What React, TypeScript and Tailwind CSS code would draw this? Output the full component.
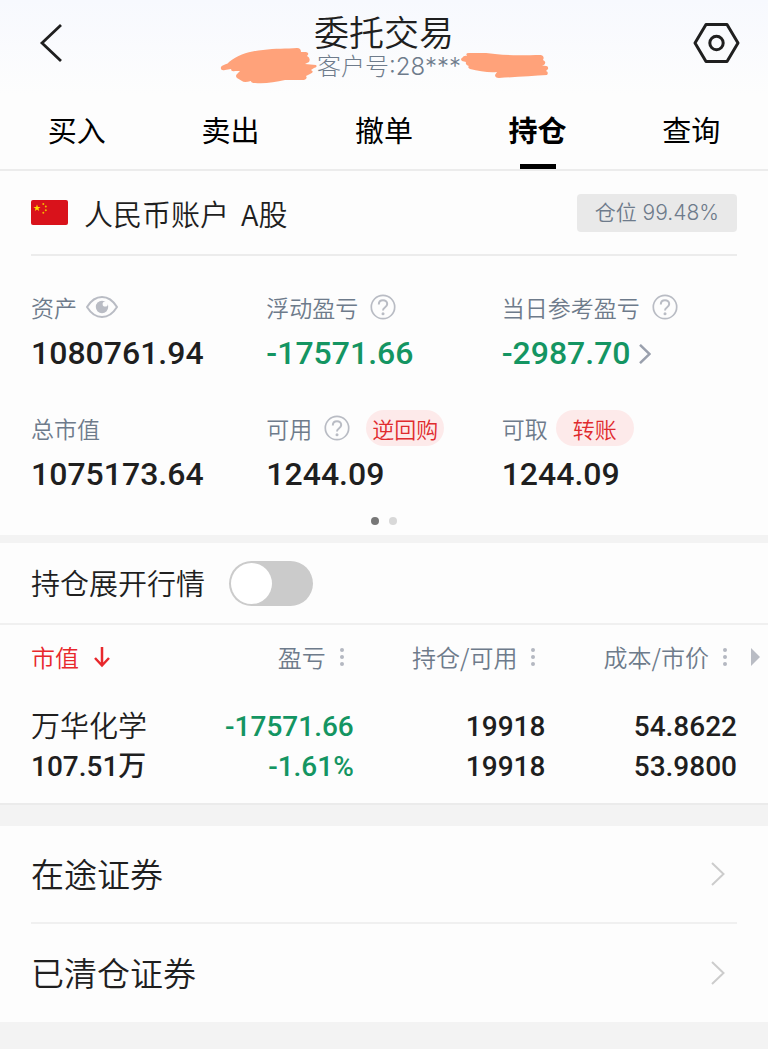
import { useState } from 'react';

const TABS = ['买入', '卖出', '撤单', '持仓', '查询'];

const COLUMNS = ['盈亏', '持仓/可用', '成本/市价'];

const HOLDINGS = [
  {
    name: '万华化学',
    marketValue: '107.51万',
    profit: '-17571.66',
    profitRate: '-1.61%',
    position: '19918',
    available: '19918',
    cost: '54.8622',
    price: '53.9800'
  }
];

const LINKS = ['在途证券', '已清仓证券'];

const HelpIcon = () => (
  <svg viewBox="0 0 26 26" className="w-[26px] h-[26px]" fill="none" stroke="#b9bcc4" strokeWidth="2">
    <circle cx="13" cy="13" r="11.7" strokeWidth="1.7" />
    <path d="M8.8 10.4c0-2.5 1.8-4.2 4.2-4.2s4.2 1.6 4.2 3.8c0 1.8-1 2.6-2.3 3.5-1.3.9-1.9 1.6-1.9 3.1" />
    <circle cx="13" cy="19.8" r="1.5" fill="#b9bcc4" stroke="none" />
  </svg>
);

const EyeIcon = () => (
  <svg viewBox="0 0 34 24" className="w-[34px] h-6">
    <path
      d="M2 12C6 5.500 11 2 17 2s11 3.500 15 10c-4 6.500-9 10-15 10S6 18.500 2 12z"
      fill="none"
      stroke="#b9bcc4"
      strokeWidth="2"
      strokeLinejoin="round"
    />
    <circle cx="17" cy="12" r="6.200" fill="#b9bcc4" />
    <circle cx="20.200" cy="9" r="2.600" fill="#fdfdfd" />
  </svg>
);

const FlagIcon = () => (
  <svg viewBox="0 0 37 25" className="w-[37px] h-[25px]">
    <rect width="37" height="25" rx="2" fill="#d9121b" />
    <path d="M6 4.400l.9 2.500h2.700l-2.200 1.600.8 2.600L6 9.500l-2.200 1.600.8-2.600-2.200-1.600h2.700z" fill="#ffde00" />
    <g fill="#f5b800">
      <circle cx="12.300" cy="4" r="1" />
      <circle cx="14.800" cy="6.500" r="1" />
      <circle cx="14.800" cy="10.200" r="1" />
      <circle cx="12.300" cy="12.800" r="1" />
    </g>
  </svg>
);

const MoreDots = () => (
  <svg viewBox="0 0 4 20" className="w-1 h-5" fill="#b4b8c1">
    <circle cx="2" cy="3" r="2" />
    <circle cx="2" cy="10" r="2" />
    <circle cx="2" cy="17" r="2" />
  </svg>
);

const Chevron = ({ className }: { className: string }) => (
  <svg viewBox="0 0 14 24" className={className} fill="none" stroke="currentColor">
    <path d="M1 1l11.500 11L1 23" />
  </svg>
);

const App = () => {
  const [activeTab, setActiveTab] = useState('持仓');
  const [expanded, setExpanded] = useState(false);

  return (
    <div className="min-h-screen bg-[#f3f3f3] text-[#1f1f1f] font-['Noto_Sans_CJK_SC',sans-serif] font-[350]">
      <div className="bg-[#fdfdfd]">
        <header className="flex items-center justify-between h-[94px] px-7 pb-2 bg-linear-to-b from-[#f7f9fe] to-[#fdfdfd]">
          <button aria-label="返回" className="w-12 pl-[10px]">
            <svg viewBox="0 0 26 40" className="w-[26px] h-10" fill="none" stroke="#1f1f1f" strokeWidth="2.800">
              <path d="M23 2L4 20l19 18" />
            </svg>
          </button>
          <div className="flex flex-col items-center pt-[10px]">
            <h1 className="text-[35px] leading-[38px]">委托交易</h1>
            <div className="flex items-center text-2xl leading-[34px] text-[#6e7b8b]">
              <svg viewBox="0 0 98 38" className="w-[98px] h-[38px] -my-2" fill="#ffa27a">
                <path d="M2 19C4 16 8 17 10 14C20 6 32 3 44 2C56 0 68 1 78 0Q82 0 82 4L87 4Q91 5 88 8Q92 10 90 14L86 16L97 17Q99 19 95 20L92 22Q96 24 91 26L87 28Q89 31 85 32L66 32C56 34 46 36 36 35Q32 35 32 33Q25 35 23 33L18 30Q16 28 18 26L21 23L16 23Q12 24 12 21L6 22Q1 23 2 19Z" />
              </svg>
              <span className="font-['Inter','Noto_Sans_CJK_SC',sans-serif] font-light">客户号:28***</span>
              <svg viewBox="0 0 88 28" className="w-[88px] h-7 -my-2" fill="#ffa27a">
                <path d="M1 5Q3 2 6 3Q4 0 8 0C18-1 26 0 34 1C50 3 66 2 80 2Q84 3 82 7Q86 9 83 12L81 13Q88 12 87 16L85 18Q88 19 86 22C72 23 54 24 38 25Q34 25 34 22L36 19C28 20 18 18 9 16Q6 14 8 13Q4 12 5 9L1 8Q-1 6 1 5Z" />
              </svg>
            </div>
          </div>
          <button aria-label="设置" className="w-12">
            <svg viewBox="0 0 48 42" className="w-12 h-[42px]" fill="none" stroke="#1f1f1f" strokeWidth="3">
              <path d="M14 2.500h21l11 18.500-11 18.500H14L3 21z" strokeLinejoin="round" />
              <circle cx="24.500" cy="21" r="6.700" />
            </svg>
          </button>
        </header>

        <nav className="grid grid-cols-5 border-b-2 border-[#ececec] text-black">
          {TABS.map((tab) => (
            <button
              key={tab}
              onClick={() => setActiveTab(tab)}
              className={`flex flex-col items-center justify-between h-[75px] pt-[14px] text-[29px] leading-[42px] ${
                tab === activeTab ? 'font-bold' : 'font-normal'
              }`}
            >
              {tab}
              {tab === activeTab && <span className="w-9 h-[5px] bg-black"></span>}
            </button>
          ))}
        </nav>

        <section className="px-[31px]">
          <div className="flex items-center justify-between h-[85px] border-b-2 border-[#ececec]">
            <div className="flex items-center gap-4">
              <FlagIcon />
              <h2 className="flex gap-3 text-[29px] leading-10">
                <span>人民币账户</span> <span>A股</span>
              </h2>
            </div>
            <span className="px-[18px] rounded bg-[#e9e9e9] text-[#6e7b8b] text-[21px] leading-[38px] font-['Inter','Noto_Sans_CJK_SC',sans-serif]">
              仓位 99.48%
            </span>
          </div>

          <div className="grid grid-cols-3 gap-y-7 pt-[27px]">
            <div>
              <div className="flex items-center gap-2 h-12 text-[23px] text-[#6e7b8b]">
                资产
                <button aria-label="隐藏资产">
                  <EyeIcon />
                </button>
              </div>
              <div className="text-[32px] leading-[45px] font-medium font-['Roboto',sans-serif]">1080761.94</div>
            </div>
            <div>
              <div className="flex items-center gap-3 h-12 text-[23px] text-[#6e7b8b]">
                浮动盈亏
                <button aria-label="浮动盈亏说明">
                  <HelpIcon />
                </button>
              </div>
              <div className="text-[32px] leading-[45px] font-medium font-['Roboto',sans-serif] text-[#149562]">-17571.66</div>
            </div>
            <div>
              <div className="flex items-center gap-3 h-12 text-[23px] text-[#6e7b8b]">
                当日参考盈亏
                <button aria-label="当日参考盈亏说明">
                  <HelpIcon />
                </button>
              </div>
              <a
                href="#today"
                className="flex items-center gap-2 text-[32px] leading-[45px] font-medium font-['Roboto',sans-serif] text-[#149562]"
              >
                -2987.70
                <Chevron className="w-3 h-5 text-[#9aa0ad] stroke-3" />
              </a>
            </div>
            <div>
              <div className="flex items-center h-12 text-[23px] text-[#6e7b8b]">总市值</div>
              <div className="text-[32px] leading-[45px] font-medium font-['Roboto',sans-serif]">1075173.64</div>
            </div>
            <div>
              <div className="flex items-center gap-3 h-12 text-[23px] text-[#6e7b8b]">
                可用
                <button aria-label="可用说明">
                  <HelpIcon />
                </button>
                <button className="w-[78px] ml-1 rounded-full bg-[#fdeaea] text-[#e02b2e] text-[22px] leading-9">
                  逆回购
                </button>
              </div>
              <div className="text-[32px] leading-[45px] font-medium font-['Roboto',sans-serif]">1244.09</div>
            </div>
            <div>
              <div className="flex items-center gap-2 h-12 text-[23px] text-[#6e7b8b]">
                可取
                <button className="w-[78px] rounded-full bg-[#fdeaea] text-[#e02b2e] text-[22px] leading-9">
                  转账
                </button>
              </div>
              <div className="text-[32px] leading-[45px] font-medium font-['Roboto',sans-serif]">1244.09</div>
            </div>
          </div>

          <div className="flex justify-center gap-[10px] pt-5 pb-[10px]">
            <span className="w-2 h-2 rounded-full bg-[#777777]"></span>
            <span className="w-2 h-2 rounded-full bg-[#d8d8d8]"></span>
          </div>
        </section>

        <div className="h-2 bg-[#f3f3f3]"></div>

        <label className="flex items-center gap-6 h-[82px] px-[31px] border-b-2 border-[#f0f0f0] text-[29px]">
          持仓展开行情
          <input
            type="checkbox"
            role="switch"
            checked={expanded}
            onChange={() => setExpanded(!expanded)}
            className="appearance-none w-[84px] h-[45px] p-[2px] rounded-full bg-[#cbcbcb] checked:bg-[#e02b2e] before:block before:w-[41px] before:h-[41px] before:rounded-full before:bg-white checked:before:ml-auto"
          />
        </label>

        <div className="pl-[31px] pb-4 border-b-2 border-[#ebebeb]">
          <table className="w-full table-fixed">
            <colgroup>
              <col />
              <col className="w-[26%]" />
              <col className="w-[26%]" />
              <col className="w-[26%]" />
              <col className="w-[31px]" />
            </colgroup>
            <thead>
              <tr className="h-16 text-2xl text-[#6e7b8b]">
                <th className="p-0 text-left font-[350]">
                  <button className="flex items-center gap-[14px] whitespace-nowrap text-[#e8282c]">
                    市值
                    <svg viewBox="0 0 18 22" className="w-[18px] h-[22px]" fill="none" stroke="currentColor" strokeWidth="2.500">
                      <path d="M9 1v18M2 12l7 7.500 7-7.500" />
                    </svg>
                  </button>
                </th>
                {COLUMNS.map((column) => (
                  <th key={column} className="p-0 font-[350]">
                    <button className="flex items-center gap-[14px] ml-auto pr-[10px] whitespace-nowrap">
                      {column}
                      <MoreDots />
                    </button>
                  </th>
                ))}
                <th className="p-0">
                  <button aria-label="更多列" className="block ml-[14px]">
                    <svg viewBox="0 0 9 18" className="w-[9px] h-[18px]" fill="#b9bcc4">
                      <path d="M0 0l9 9-9 9z" />
                    </svg>
                  </button>
                </th>
              </tr>
            </thead>
            <tbody className="font-['Roboto','Noto_Sans_CJK_SC',sans-serif]">
              {HOLDINGS.map((item) => (
                <tr key={item.name} className="text-right text-[28px] leading-10 font-medium">
                  <td className="pt-[18px] text-left">
                    <div className="text-[29px] leading-10 font-[350]">{item.name}</div>
                    <div>{item.marketValue}</div>
                  </td>
                  <td className="pt-[18px] text-[#149562]">
                    <div>{item.profit}</div>
                    <div>{item.profitRate}</div>
                  </td>
                  <td className="pt-[18px]">
                    <div>{item.position}</div>
                    <div>{item.available}</div>
                  </td>
                  <td className="pt-[18px]">
                    <div>{item.cost}</div>
                    <div>{item.price}</div>
                  </td>
                  <td></td>
                </tr>
              ))}
            </tbody>
          </table>
        </div>
      </div>

      <div className="mt-[21px] px-[31px] bg-[#fdfdfd] divide-y-2 divide-[#f0f0f0]">
        {LINKS.map((link) => (
          <a key={link} href="#securities" className="flex items-center justify-between h-[98px] pr-3 text-[33px]">
            {link}
            <Chevron className="w-[14px] h-6 text-[#cccccc] stroke-2" />
          </a>
        ))}
      </div>
    </div>
  );
};

export default App;
